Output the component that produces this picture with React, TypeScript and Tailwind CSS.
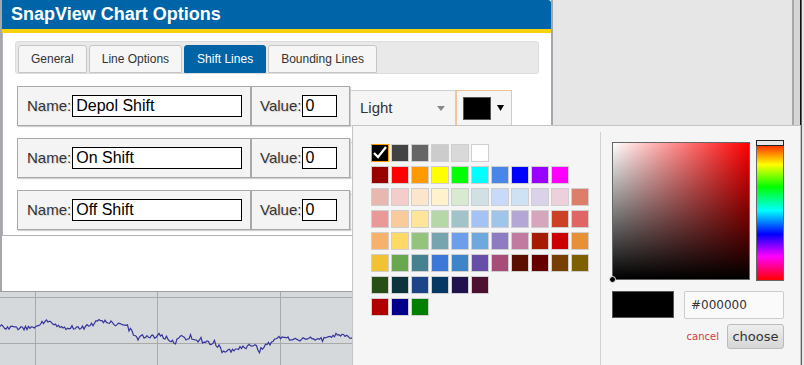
import React from "react";

const palette: string[][] = [
  ["#000000", "#434343", "#666666", "#cccccc", "#d9d9d9", "#ffffff"],
  ["#980000", "#ff0000", "#ff9900", "#ffff00", "#00ff00", "#00ffff", "#4a86e8", "#0000ff", "#9900ff", "#ff00ff"],
  ["#e6b8af", "#f4cccc", "#fce5cd", "#fff2cc", "#d9ead3", "#d0e0e3", "#c9daf8", "#cfe2f3", "#d9d2e9", "#ead1dc", "#dd7e6b"],
  ["#ea9999", "#f9cb9c", "#ffe599", "#b6d7a8", "#a2c4c9", "#a4c2f4", "#9fc5e8", "#b4a7d6", "#d5a6bd", "#cc4125", "#e06666"],
  ["#f6b26b", "#ffd966", "#93c47d", "#76a5af", "#6d9eeb", "#6fa8dc", "#8e7cc3", "#c27ba0", "#a61c00", "#cc0000", "#e69138"],
  ["#f1c232", "#6aa84f", "#45818e", "#3c78d8", "#3d85c6", "#674ea7", "#a64d79", "#5b0f00", "#660000", "#783f04", "#7f6000"],
  ["#274e13", "#0c343d", "#1c4587", "#073763", "#20124d", "#4c1130"],
  ["#b00000", "#00008b", "#008000"],
];

function wavePath(): string {
  const keys: number[][] = [
    [0, 328], [33, 328], [45, 321], [60, 326], [70, 330], [85, 327], [100, 320], [115, 324], [131, 327],
    [133, 335], [150, 337], [160, 335], [175, 343], [180, 337], [200, 341], [220, 346], [225, 352],
    [240, 348], [255, 345], [258, 350], [265, 346], [275, 340], [280, 338], [300, 340], [305, 338],
    [320, 340], [330, 338], [345, 335], [353, 337], [420, 335], [553, 336],
  ];
  let s = 12345;
  const rnd = () => {
    s = (s * 16807) % 2147483647;
    return s / 2147483647;
  };
  let d = "";
  for (let x = 0; x <= 553; x += 1.5) {
    let i = 0;
    while (i < keys.length - 2 && keys[i + 1][0] < x) i++;
    const [x0, y0] = keys[i];
    const [x1, y1] = keys[i + 1];
    const t = Math.min(1, Math.max(0, (x - x0) / (x1 - x0)));
    let y = y0 + (y1 - y0) * t;
    y += (rnd() - 0.5) * 4;
    if (rnd() < 0.07) y += (rnd() - 0.5) * 10;
    d += (x === 0 ? "M" : "L") + x.toFixed(1) + " " + (y - 292).toFixed(1) + " ";
  }
  return d;
}

function Tab({ label, active }: { label: string; active?: boolean }) {
  return (
    <div
      className={
        active
          ? "h-[28px] px-[12px] flex items-center border border-[#0063a6] bg-[#0063a6] text-white text-[12px] rounded-t-[3px]"
          : "h-[28px] px-[12px] flex items-center border border-[#c6c6c6] bg-[#f6f6f6] text-[#333] text-[12px] rounded-t-[3px]"
      }
    >
      {label}
    </div>
  );
}

function Row({ name }: { name: string }) {
  const cell =
    "bg-[#f4f4f4] border border-[#a8a8a8] shadow-[1px_1px_1px_rgba(0,0,0,0.18)] flex items-center";
  const label = "text-[15px] text-[#333] [text-shadow:1px_1px_1px_rgba(0,0,0,0.15)]";
  return (
    <div className="flex items-end h-[40px]">
      <div className={cell + " w-[234px] h-[40px] pl-[9px]"}>
        <span className={label}>Name:</span>
        <div className="ml-[1px] w-[170px] h-[22px] bg-white border border-black text-[16px] leading-[20px] pl-[3px] text-black">
          {name}
        </div>
      </div>
      <div className={cell + " w-[99px] h-[40px] pl-[8px]"}>
        <span className={label}>Value:</span>
        <div className="ml-[1px] w-[35px] h-[22px] bg-white border border-black text-[16px] leading-[20px] pl-[2px] text-black">
          0
        </div>
      </div>
      <div className="w-[106px] h-[36px] bg-[#f5f5f5] border border-[#cfcfcf] flex items-center pl-[9px] pr-[10px] justify-between">
        <span className="text-[15px] text-[#333]">Light</span>
        <svg width="8" height="5" viewBox="0 0 8 5">
          <path d="M0 0 L8 0 L4 5 Z" fill="#888" />
        </svg>
      </div>
      <div className="w-[56px] h-[36px] bg-[#f5f5f5] border border-[#f0c49a] flex items-center pl-[6px]">
        <div className="w-[28px] h-[23px] bg-black border border-[#555]" />
        <svg className="ml-[6px]" width="7" height="6" viewBox="0 0 7 6">
          <path d="M0 0 L7 0 L3.5 6 Z" fill="#000" />
        </svg>
      </div>
    </div>
  );
}

function Dialog() {
  return (
    <div className="h-[291px] flex flex-col border-l-2 border-r-2 border-[#a4a8ae] bg-white">
      <div className="h-[29px] bg-[#0064a8] rounded-tr-[3px] pl-[9px] flex items-center text-white font-bold text-[18px]">
        SnapView Chart Options
      </div>
      <div className="h-[4px] bg-[#f6d20e]" />
      <div className="h-[203px] border-l border-b border-[#b3b3b3]">
        <div className="ml-[12px] mt-[8px] w-[524px] h-[33px] bg-[#e9e9e9] border border-[#dcdcdc] rounded-[3px] flex items-end gap-[2px] pl-[2px]">
          <Tab label="General" />
          <Tab label="Line Options" />
          <Tab label="Shift Lines" active />
          <Tab label="Bounding Lines" />
        </div>
        <div className="ml-[14px] mt-[12px] flex flex-col gap-[12px]">
          <Row name="Depol Shift" />
          <Row name="On Shift" />
          <Row name="Off Shift" />
        </div>
      </div>
    </div>
  );
}

function Chart() {
  const d = wavePath();
  return (
    <div className="h-[74px] border-t border-[#9e9e9e] bg-[#d5d9dc]">
      <svg width="553" height="73" className="block">
        <line x1="0" y1="5.5" x2="553" y2="5.5" stroke="#a9a9a9" strokeWidth="1" />
        <line x1="0" y1="51.5" x2="553" y2="51.5" stroke="#a9a9a9" strokeWidth="1" />
        <line x1="35.5" y1="0" x2="35.5" y2="73" stroke="#a9a9a9" strokeWidth="1" />
        <line x1="157.5" y1="0" x2="157.5" y2="73" stroke="#a9a9a9" strokeWidth="1" />
        <line x1="280.5" y1="0" x2="280.5" y2="73" stroke="#a9a9a9" strokeWidth="1" />
        <path d={d} fill="none" stroke="#35359c" strokeWidth="1.2" />
      </svg>
    </div>
  );
}

function ColorPicker() {
  return (
    <div className="absolute left-[352px] top-[125px] w-[449px] h-[245px] bg-[#f5f5f5] border border-[#c4c4c4] flex font-['DejaVu_Sans',sans-serif]">
      <div className="w-[247px] shrink-0 pl-[18px] pt-[18px] flex flex-col gap-[4px]">
        {palette.map((row, ri) => (
          <div key={ri} className="flex gap-[2px]">
            {row.map((c, ci) =>
              ri === 0 && ci === 0 ? (
                <div key={ci} className="w-[18px] h-[18px] border border-[#ff9900] bg-black flex items-center justify-center">
                  <svg width="16" height="16" viewBox="0 0 16 16">
                    <polyline points="2,8 6,12 14,2" fill="none" stroke="#000" strokeWidth="4" />
                    <polyline points="2,8 6,12 14,2" fill="none" stroke="#fff" strokeWidth="2.2" />
                  </svg>
                </div>
              ) : (
                <div key={ci} className="w-[18px] h-[18px] border border-[#cfcfcf]" style={{ backgroundColor: c }} />
              )
            )}
          </div>
        ))}
      </div>
      <div className="mt-[6px] border-l border-[#d2d2d2] pl-[11px] pt-[10px] flex flex-col">
        <div className="flex gap-[6px]">
          <div className="relative w-[138px] h-[138px] border border-[#666] bg-[#ff0000]">
            <div className="absolute inset-0 bg-[linear-gradient(to_right,#ffffff,rgba(255,255,255,0))]" />
            <div className="absolute inset-0 bg-[linear-gradient(to_top,#000000,rgba(0,0,0,0))]" />
            <div className="absolute -left-[4px] -bottom-[4px] w-[7px] h-[7px] rounded-full bg-black border border-[#eee]" />
          </div>
          <div className="relative w-[28px] h-[141px] -mt-[2px] border border-[#666] bg-[linear-gradient(to_bottom,#ff0000_0%,#ffff00_17%,#00ff00_33%,#00ffff_50%,#0000ff_67%,#ff00ff_83%,#ff0000_100%)]">
            <div className="absolute -left-[1px] -right-[1px] -top-[1px] h-[6px] bg-[#e6e6e6] border border-[#222]" />
          </div>
        </div>
        <div className="mt-[10px] flex">
          <div className="w-[62px] h-[27px] bg-black border border-[#555]" />
          <div className="ml-[10px] w-[100px] h-[28px] border border-[#cccccc] rounded-[2px] bg-[#fafafa] text-[12px] leading-[26px] pl-[6px] text-[#333]">
            #000000
          </div>
        </div>
        <div className="mt-[5px] w-[172px] flex justify-end items-center gap-[8px]">
          <span className="text-[10px] text-[#d63b3b]">cancel</span>
          <div className="w-[57px] h-[25px] border border-[#bbbbbb] rounded-[3px] bg-[linear-gradient(to_bottom,#eeeeee,#d6d6d6)] text-[13px] text-[#333] flex items-center justify-center">
            choose
          </div>
        </div>
      </div>
    </div>
  );
}

export default function App() {
  return (
    <div className="relative w-[804px] h-[365px] overflow-hidden bg-[#e6e6e6] flex font-['Liberation_Sans',Arial,sans-serif]">
      <div className="w-[553px] shrink-0 flex flex-col">
        <Dialog />
        <Chart />
      </div>
      <div className="w-[241px] shrink-0 border-r-2 border-[#a8a8a8]" />
      <div className="w-[6px] shrink-0 bg-[#d5d5d5]" />
      <div className="w-[1px] shrink-0 bg-[#111]" />
      <div className="w-[1px] shrink-0 bg-[#2b6cb0]" />
      <ColorPicker />
    </div>
  );
}
